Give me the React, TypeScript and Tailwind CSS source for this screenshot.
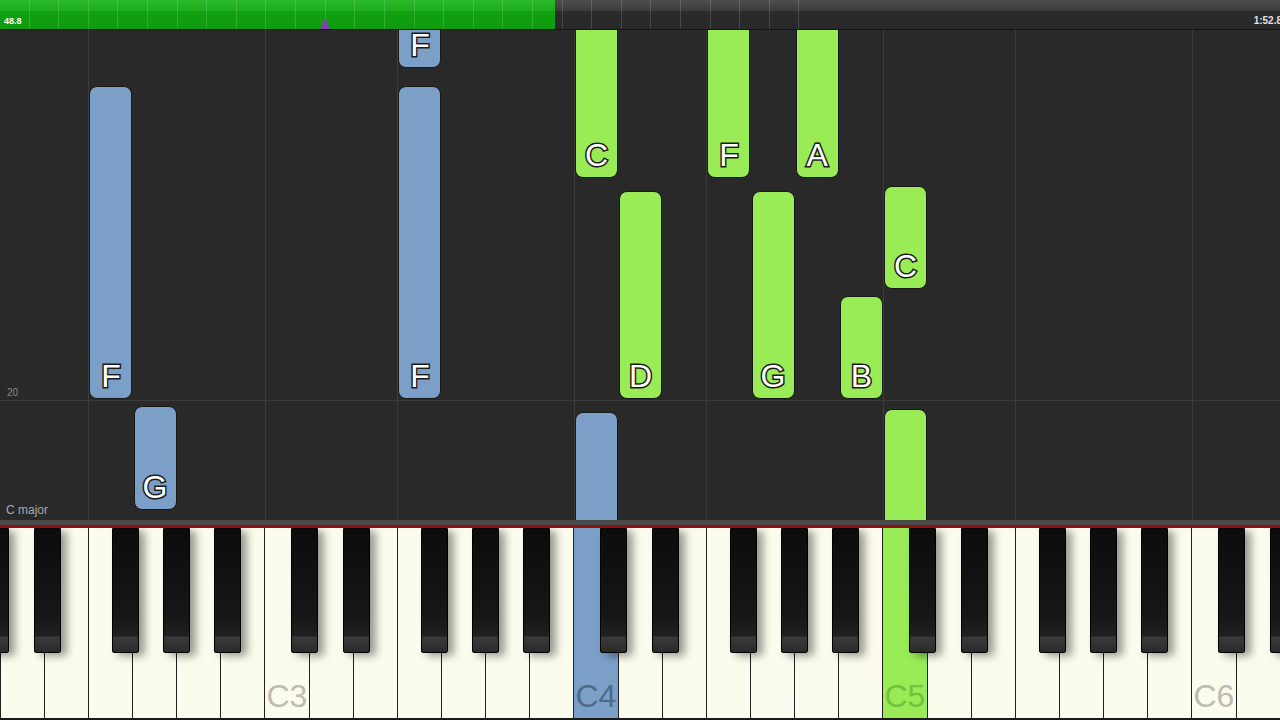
import React from 'react';

const W = 44.143;
const X0 = -43.5;
const keyX = (i: number) => X0 + i * W;

const BLUE = '#7c9fc8';
const GREEN = '#99ec55';

type Note = { key: number; top: number; h: number; color: string; label?: string };

// positions relative to the note field (which starts at y=30)
const notes: Note[] = [
  { key: 3, top: 56, h: 313, color: BLUE, label: 'F' },
  { key: 4, top: 376, h: 104, color: BLUE, label: 'G' },
  { key: 10, top: -12, h: 50, color: BLUE, label: 'F' },
  { key: 10, top: 56, h: 313, color: BLUE, label: 'F' },
  { key: 14, top: 382, h: 140, color: BLUE },
  { key: 14, top: -30, h: 178, color: GREEN, label: 'C' },
  { key: 15, top: 161, h: 208, color: GREEN, label: 'D' },
  { key: 17, top: -30, h: 178, color: GREEN, label: 'F' },
  { key: 18, top: 161, h: 208, color: GREEN, label: 'G' },
  { key: 19, top: -30, h: 178, color: GREEN, label: 'A' },
  { key: 20, top: 266, h: 103, color: GREEN, label: 'B' },
  { key: 21, top: 156, h: 103, color: GREEN, label: 'C' },
  { key: 21, top: 379, h: 140, color: GREEN },
];

const gridKeys = [3, 7, 10, 14, 17, 21, 24, 28];
const blackOffsets = [25.5, 77.5, 155.5, 206.5, 257.5];
const names = ['C', 'D', 'E', 'F', 'G', 'A', 'B'];

function TopBar() {
  return (
    <div className="relative h-[30px] flex border-b border-[#141414] overflow-hidden">
      <div className="w-[555px] h-full flex items-end pl-[4px] pb-[3px] bg-[linear-gradient(#2ab82a_0%,#1cad1c_38%,#11a011_40%,#0e9c0e_100%)]">
        <span className="text-[9px] leading-none font-bold text-white">48.8</span>
      </div>
      <div className="flex-1 h-full flex items-end justify-end pb-[3px] -mr-[2px] bg-[linear-gradient(#4e4e4e_0%,#3b3b3b_38%,#2b2b2b_40%,#282828_100%)]">
        <span className="text-[10px] leading-none font-bold text-[#e0e0e0] whitespace-nowrap">1:52.8</span>
      </div>
      {/* tick overlay */}
      <div className="absolute inset-0 flex pointer-events-none">
        {Array.from({ length: 27 }).map((_, i) => (
          <div key={i} className="w-[29.62px] shrink-0 h-full border-r border-white/15" />
        ))}
      </div>
      <svg className="absolute left-[320px] top-[18px]" width="10" height="12" viewBox="0 0 10 12">
        <path d="M5 0 L10 12 L0 12 Z" fill="#8a3cb8" />
      </svg>
    </div>
  );
}

function NoteField() {
  return (
    <div className="relative h-[490px] bg-[#292929] overflow-hidden flex flex-col">
      <div className="h-[371px] flex items-end pl-[7px] pb-[2px] border-b border-[#3c3c3c]">
        <span className="text-[10px] leading-none text-[#8a8a8a]">20</span>
      </div>
      <div className="flex-1 flex items-end pl-[6px] pb-[4px]">
        <span className="text-[12px] leading-none text-[#a8a8a8]">C major</span>
      </div>
      {gridKeys.map((k) => (
        <div key={k} className="absolute top-0 bottom-0 w-px bg-[#3c3c3c]" style={{ left: Math.round(keyX(k)) - 1 }} />
      ))}
      {notes.map((n, i) => (
        <div
          key={i}
          className="absolute rounded-[8px] border border-[#181818] flex flex-col justify-end items-center pb-[6px]"
          style={{ left: keyX(n.key) + 0.5, width: 43, top: n.top, height: n.h, background: n.color }}
        >
          {n.label && (
            <span className="text-[32px] leading-none text-white [-webkit-text-stroke:3px_#1a1a1a] [paint-order:stroke_fill]">
              {n.label}
            </span>
          )}
        </div>
      ))}
    </div>
  );
}

function Keyboard() {
  const whites = Array.from({ length: 30 }).map((_, i) => ({
    name: names[i % 7],
    octave: 2 + Math.floor(i / 7),
    i,
  }));
  return (
    <div className="relative h-[192px] overflow-hidden bg-[#1a1a1a]">
      <div className="flex h-[190px] ml-[-43.5px]">
        {whites.map((w) => {
          const pressed = w.i === 14 ? 'blue' : w.i === 21 ? 'green' : null;
          const bg = pressed === 'blue' ? 'bg-[#7c9fc8]' : pressed === 'green' ? 'bg-[#99ec55]' : 'bg-[#fcfcee]';
          const labelColor =
            pressed === 'blue' ? 'text-[#4f6b8c]' : pressed === 'green' ? 'text-[#72c23c]' : 'text-[#bcbcb2]';
          return (
            <div
              key={w.i}
              className={`w-[44.143px] shrink-0 h-full border-r-[1.5px] border-[#222] flex items-end pl-[1px] pb-[6px] ${bg}`}
            >
              {w.name === 'C' && w.i > 0 && (
                <span className={`text-[32px] leading-none ${labelColor}`}>C{w.octave}</span>
              )}
            </div>
          );
        })}
      </div>
      {Array.from({ length: 5 }).map((_, o) =>
        blackOffsets.map((off, j) => (
          <div
            key={`${o}-${j}`}
            className="absolute top-0 w-[27px] h-[125px] rounded-b-[2px] border border-black bg-[linear-gradient(#0c0c0c_0%,#161616_70%,#202020_87%,#3a3a3a_88%,#2a2a2a_100%)] shadow-[6px_3px_8px_rgba(0,0,0,0.4)]"
            style={{ left: X0 + o * 7 * W + off }}
          />
        ))
      )}
    </div>
  );
}

export default function App() {
  return (
    <div className="w-[1280px] h-[720px] overflow-hidden flex flex-col bg-[#292929] font-['Liberation_Sans',Arial,sans-serif]">
      <TopBar />
      <NoteField />
      <div className="h-[5px] bg-[#4a4a4a]" />
      <div className="h-[3px] bg-[#8e1010]" />
      <Keyboard />
    </div>
  );
}
